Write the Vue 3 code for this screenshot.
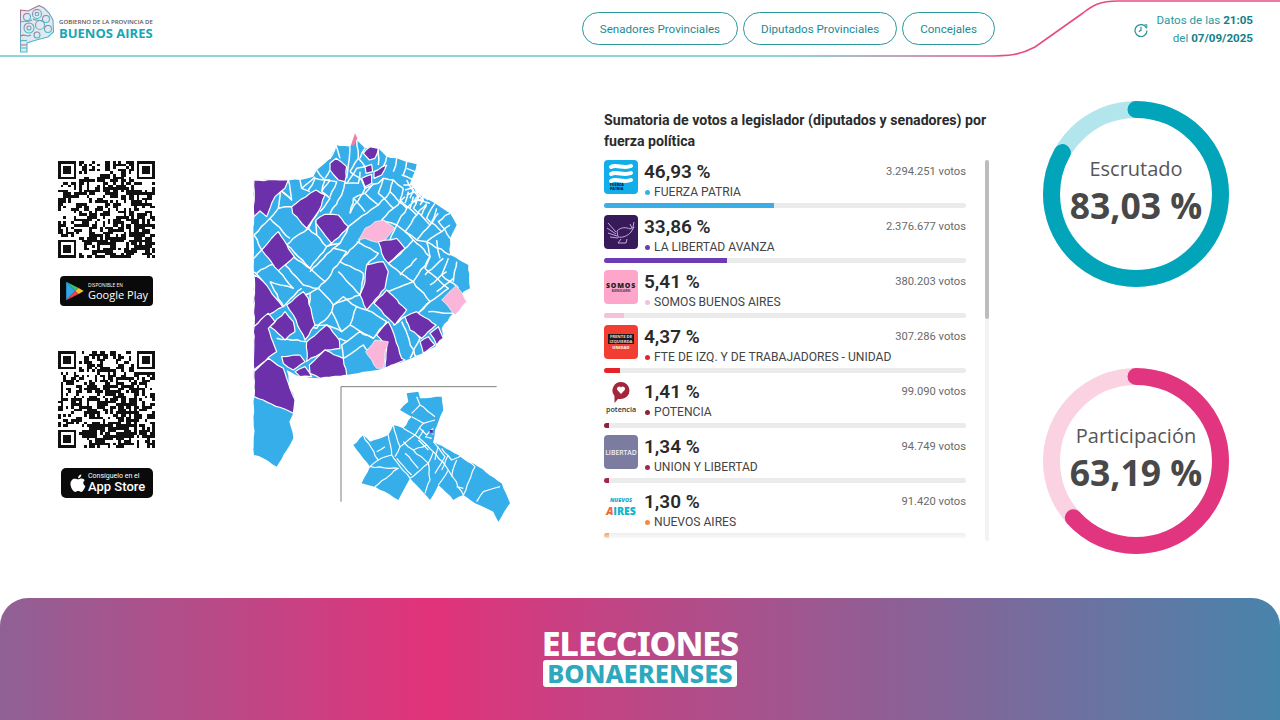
<template>
  <div class="page">
    <header class="top">
      <svg class="curve" width="1280" height="58" viewBox="0 0 1280 58">
        <defs>
          <linearGradient id="curveGrad" gradientUnits="userSpaceOnUse" x1="780" y1="0" x2="1010" y2="0">
            <stop offset="0" stop-color="#69c8cf" />
            <stop offset="1" stop-color="#e84a86" />
          </linearGradient>
        </defs>
        <path d="M0 56 H985 C1010 56 1020 55 1035 47 L1083 13 C1093 5 1100 1 1118 1 H1280" fill="none" stroke="url(#curveGrad)" stroke-width="1.6" />
      </svg>
      <div class="brand">
        <svg class="brand-map" width="34" height="48" viewBox="0 0 34 48">
          <defs>
            <linearGradient id="brandGrad" x1="0" y1="0" x2="0.4" y2="1">
              <stop offset="0" stop-color="#c9577f" />
              <stop offset="0.35" stop-color="#7f97b5" />
              <stop offset="1" stop-color="#45c0cc" />
            </linearGradient>
          </defs>
          <path d="M0.5 5 L8 6 L14 3 L19 0.5 L24 3 L29 8 L33 15 L33.5 27 L28 32 L20 34 L13 36 L7 38 L7 47 L0.5 47 Z" fill="#dfe9ef" />
          <g fill="none" stroke="url(#brandGrad)" stroke-width="1.1">
            <path d="M0.5 5 L8 6 L14 3 L19 0.5 L24 3 L29 8 L33 15 L33.5 27 L28 32 L20 34 L13 36 L7 38 L7 47 L0.5 47 Z" />
            <circle cx="7" cy="12" r="3.5" />
            <circle cx="17" cy="9" r="4.5" />
            <circle cx="17" cy="9" r="1.8" />
            <circle cx="26" cy="14" r="3.5" />
            <circle cx="9" cy="23" r="5" />
            <circle cx="9" cy="23" r="2" />
            <circle cx="20" cy="20" r="4.5" />
            <circle cx="28" cy="24" r="3.5" />
            <circle cx="17" cy="30" r="3" />
            <path d="M1 17 C5 15 8 18 12 15 M13 14 C17 17 21 13 25 18" />
            <path d="M1 31 C4 28 7 33 11 30 M1 36 C3 34 5 37 7 35" />
            <path d="M1 40 H7 M1 43 H7" />
          </g>
        </svg>
        <div class="brand-text">
          <span class="brand-small">GOBIERNO DE LA PROVINCIA DE</span>
          <span class="brand-big">BUENOS AIRES</span>
        </div>
      </div>
      <nav class="tabs">
        <a v-for="tab in tabs" :key="tab" class="tab">{{ tab }}</a>
      </nav>
      <div class="status">
        <svg class="status-icon" width="14" height="14" viewBox="0 0 14 14" fill="none" stroke="#2a8f96" stroke-width="1.2">
          <path d="M12.6 5.4 A6 6 0 1 0 13 7.4" />
          <path d="M10.4 1.9 L12.8 1.7 L12.8 5.2" stroke-width="1" />
          <path d="M7 3.8 V7.3 L4.8 8.6" />
        </svg>
        <div class="status-text">
          <div>Datos de las <b>21:05</b></div>
          <div>del <b>07/09/2025</b></div>
        </div>
      </div>
    </header>

    <main class="content">
      <section class="stores">
        <svg class="qr" width="97" height="97" :viewBox="`0 0 ${qrSize} ${qrSize}`" shape-rendering="crispEdges">
          <path :d="qrA" fill="#111" />
        </svg>
        <div class="badge play">
          <svg width="19" height="20" viewBox="0 0 22 24">
            <path d="M1 1 L12 12 L1 23 Z" fill="#2fa6e8" />
            <path d="M1 1 L16 8.5 L12 12 Z" fill="#35c26f" />
            <path d="M1 23 L16 15.5 L12 12 Z" fill="#ee4152" />
            <path d="M16 8.5 L22 12 L16 15.5 L12 12 Z" fill="#fbc02d" />
          </svg>
          <div class="badge-text">
            <span class="play-small">DISPONIBLE EN</span>
            <span class="play-big">Google Play</span>
          </div>
        </div>
        <svg class="qr qr-second" width="97" height="97" :viewBox="`0 0 ${qrSize} ${qrSize}`" shape-rendering="crispEdges">
          <path :d="qrB" fill="#111" />
        </svg>
        <div class="badge apple">
          <svg width="16" height="19" viewBox="0 0 17 20" fill="#fff">
            <path d="M12 0.5 C12.2 2.6 10.4 4.6 8.5 4.5 C8.3 2.5 10.2 0.6 12 0.5 Z" />
            <path d="M8.6 5.6 C9.6 5.6 10.8 4.7 12.4 4.8 C13.6 4.9 14.9 5.4 15.7 6.6 C13.4 8 13.8 11.6 16.4 12.7 C15.7 14.6 13.9 18.9 12 18.9 C10.8 18.9 10.2 18.1 8.7 18.1 C7.2 18.1 6.5 18.9 5.4 18.9 C3.3 18.9 0.5 14 0.5 10.6 C0.5 7 2.8 4.9 5 4.9 C6.3 4.9 7.6 5.6 8.6 5.6 Z" />
          </svg>
          <div class="badge-text">
            <span class="apple-small">Consíguelo en el</span>
            <span class="apple-big">App Store</span>
          </div>
        </div>
      </section>

      <svg class="map" width="265" height="405" viewBox="0 0 795 1215">
        <polygon :points="mainOutline" fill="#35aeea" />
        <g fill="none" stroke="#fff" stroke-width="4.4" stroke-linejoin="round">
          <polyline v-for="(line, i) in mapLines" :key="i" :points="line" />
        </g>
        <polygon v-for="(p, i) in purpleAreas" :key="'p' + i" :points="p" fill="#6c31aa" stroke="#fff" stroke-width="3.6" stroke-linejoin="round" />
        <polygon v-for="(p, i) in pinkAreas" :key="'k' + i" :points="p" fill="#fbb5d8" stroke="#fff" stroke-width="2" stroke-linejoin="round" />
        <polygon points="303,60 315,25 322,40 312,62" fill="#ee7f9f" />
        <g transform="translate(255,765)">
          <path d="M18 365 V20 H485" fill="none" stroke="#7d7d7d" stroke-width="3" />
          <polygon :points="insetOutline" fill="#35aeea" />
          <g fill="none" stroke="#fff" stroke-width="3.6" stroke-linejoin="round">
            <polyline v-for="(line, i) in insetLines" :key="i" :points="line" />
          </g>
          <rect x="284" y="150" width="9" height="8" fill="#5b2aa0" />
          <rect x="290" y="160" width="6" height="4" fill="#f6b6d8" />
        </g>
      </svg>

      <section class="results">
        <h2 class="results-title">Sumatoria de votos a legislador (diputados y senadores) por fuerza política</h2>
        <div class="results-body">
          <div class="rows">
            <div v-for="party in parties" :key="party.name" class="row">
              <div class="row-main">
                <div class="party-logo" :class="party.logo">
                  <template v-if="party.logo === 'fp'">
                    <svg width="34" height="34" viewBox="0 0 34 34" fill="none" stroke="#fff" stroke-width="4" stroke-linecap="round">
                      <path d="M7 7 C12 4 20 9 27 6" />
                      <path d="M7 14 C12 11 20 16 27 13" />
                      <path d="M7 21 C12 18 20 23 27 20" />
                    </svg>
                    <span class="fp-name">FUERZA<br />PATRIA</span>
                  </template>
                  <svg v-else-if="party.logo === 'lla'" width="34" height="34" viewBox="0 0 34 34" fill="none" stroke="#d6b8ea" stroke-width="0.9">
                    <path d="M4 8 L12 17 M3 13 L12 19 M4 18 L13 21 M6 22 L14 23" />
                    <path d="M13 16 C17 12 22 12 26 14 L30 12 L27 17 C24 21 18 23 14 22 Z" />
                    <path d="M26 9 L28 13 M30 7 L29 12 M17 24 L14 28 L22 28 L23 24" />
                  </svg>
                  <template v-else-if="party.logo === 'somos'">
                    <span class="somos-name">SOMOS</span>
                    <span class="somos-sub">BUENOS AIRES</span>
                  </template>
                  <div v-else-if="party.logo === 'fit'" class="fit-box">
                    <span class="fit-name">FRENTE DE<br />IZQUIERDA</span>
                    <span class="fit-sub">UNIDAD</span>
                  </div>
                  <template v-else-if="party.logo === 'potencia'">
                    <svg width="20" height="24" viewBox="0 0 20 24">
                      <path d="M10 1 A8.5 8.5 0 0 1 10 18 H7 L3.5 22 V15 A8.5 8.5 0 0 1 10 1 Z" fill="#a3263c" />
                      <path d="M10 13 L6.3 9 A2.2 2.2 0 0 1 10 6.6 A2.2 2.2 0 0 1 13.7 9 Z" fill="#fff" />
                    </svg>
                    <span class="potencia-name">potencia</span>
                  </template>
                  <span v-else-if="party.logo === 'union'" class="union-name">LIBERTAD</span>
                  <template v-else>
                    <span class="nuevos-small">NUEVOS</span>
                    <span class="nuevos-big"><i>A</i>IRES</span>
                  </template>
                </div>
                <div class="row-text">
                  <div class="row-top">
                    <span class="percent">{{ party.percent }} %</span>
                    <span class="votes">{{ party.votes }} votos</span>
                  </div>
                  <div class="party-name">
                    <span class="dot" :style="{ background: party.color }"></span>{{ party.name }}
                  </div>
                </div>
              </div>
              <div class="bar">
                <div class="bar-fill" :style="{ width: barWidth(party), background: party.color }"></div>
              </div>
            </div>
          </div>
          <div class="scroll-track"><div class="scroll-thumb"></div></div>
        </div>
      </section>

      <section class="gauges">
        <div v-for="gauge in gauges" :key="gauge.label" class="gauge">
          <svg width="186" height="186" viewBox="0 0 186 186">
            <circle cx="93" cy="93" r="84.5" fill="none" :stroke="gauge.track" stroke-width="17" />
            <circle
              cx="93"
              cy="93"
              r="84.5"
              fill="none"
              :stroke="gauge.color"
              stroke-width="17"
              stroke-linecap="round"
              transform="rotate(-90 93 93)"
              :stroke-dasharray="dash(gauge.value)"
            />
          </svg>
          <div class="gauge-text">
            <span class="gauge-label">{{ gauge.label }}</span>
            <span class="gauge-value">{{ gauge.text }}</span>
          </div>
        </div>
      </section>
    </main>

    <footer class="bottom">
      <div class="title-top">ELECCIONES</div>
      <div class="title-box">BONAERENSES</div>
    </footer>
  </div>
</template>

<script setup>
const tabs = ['Senadores Provinciales', 'Diputados Provinciales', 'Concejales'];

const parties = [
  { logo: 'fp', percent: '46,93', votes: '3.294.251', name: 'FUERZA PATRIA', color: '#3caee6', value: 46.93 },
  { logo: 'lla', percent: '33,86', votes: '2.376.677', name: 'LA LIBERTAD AVANZA', color: '#6d3cb4', value: 33.86 },
  { logo: 'somos', percent: '5,41', votes: '380.203', name: 'SOMOS BUENOS AIRES', color: '#f8bfdc', value: 5.41 },
  { logo: 'fit', percent: '4,37', votes: '307.286', name: 'FTE DE IZQ. Y DE TRABAJADORES - UNIDAD', color: '#e3242b', value: 4.37 },
  { logo: 'potencia', percent: '1,41', votes: '99.090', name: 'POTENCIA', color: '#8e2338', value: 1.41 },
  { logo: 'union', percent: '1,34', votes: '94.749', name: 'UNION Y LIBERTAD', color: '#a3264f', value: 1.34 },
  { logo: 'nuevos', percent: '1,30', votes: '91.420', name: 'NUEVOS AIRES', color: '#f58a3c', value: 1.3 },
];

const gauges = [
  { label: 'Escrutado', text: '83,03 %', value: 83.03, color: '#02a4b9', track: '#b3e5ed' },
  { label: 'Participación', text: '63,19 %', value: 63.19, color: '#e2357f', track: '#fad2e2' },
];

function barWidth(party) {
  return Math.max(party.value, 1.3) + '%';
}

function dash(value) {
  const length = 2 * Math.PI * 84.5;
  return `${(length * value) / 100} ${length}`;
}

function makeRandom(seed) {
  let state = seed;
  return () => {
    state = (state * 1664525 + 1013904223) >>> 0;
    return ((state >>> 16) & 1023) / 1024;
  };
}

// fake QR codes, the pattern only has to look dense
const qrSize = 37;

function buildQr(seed) {
  const rand = makeRandom(seed);
  const inFinder = (x, y) => (x < 8 && y < 8) || (x > qrSize - 9 && y < 8) || (x < 8 && y > qrSize - 9);
  let d = '';
  const prev = [];
  for (let y = 0; y < qrSize; y++) {
    for (let x = 0; x < qrSize; x++) {
      // copy a neighbour now and then, gives the chunky blocks of the original
      const r = rand();
      let on = rand() < 0.54;
      if (r < 0.16 && x > 0) on = prev[y * qrSize + x - 1];
      else if (r < 0.3 && y > 0) on = prev[(y - 1) * qrSize + x];
      prev[y * qrSize + x] = on;
      if (on && !inFinder(x, y)) d += `M${x} ${y}h1v1h-1z`;
    }
  }
  const finder = (x, y) =>
    `M${x} ${y}h7v1h-7zM${x} ${y + 6}h7v1h-7zM${x} ${y + 1}h1v5h-1zM${x + 6} ${y + 1}h1v5h-1zM${x + 2} ${y + 2}h3v3h-3z`;
  return d + finder(0, 0) + finder(qrSize - 7, 0) + finder(0, qrSize - 7);
}

const qrA = buildQr(20250907);
const qrB = buildQr(777123);

// wobble straight segments so the borders look like real partido limits
const wobble = makeRandom(4242);

function roughen(flat, closed, amount = 3) {
  const pts = [];
  const count = flat.length / 2;
  const last = closed ? count : count - 1;
  for (let i = 0; i < last; i++) {
    const x1 = flat[i * 2];
    const y1 = flat[i * 2 + 1];
    const x2 = flat[((i + 1) % count) * 2];
    const y2 = flat[((i + 1) % count) * 2 + 1];
    pts.push(`${x1},${y1}`);
    const steps = Math.floor(Math.hypot(x2 - x1, y2 - y1) / 14);
    for (let s = 1; s < steps; s++) {
      const t = s / steps;
      const jx = (wobble() - 0.5) * 2 * amount;
      const jy = (wobble() - 0.5) * 2 * amount;
      pts.push(`${(x1 + (x2 - x1) * t + jx).toFixed(1)},${(y1 + (y2 - y1) * t + jy).toFixed(1)}`);
    }
  }
  if (!closed) pts.push(`${flat[flat.length - 2]},${flat[flat.length - 1]}`);
  return pts.join(' ');
}

// map coordinates are 3x the screen pixels
const mainOutline = roughen(
  [12, 165, 150, 165, 190, 155, 200, 135, 240, 100, 258, 60, 300, 65, 320, 45, 345, 70, 385, 70, 410, 95, 440, 100, 500, 118, 490, 150, 480, 175, 510, 210, 555, 235, 600, 265, 620, 300, 600, 340, 600, 390, 655, 420, 660, 490, 640, 500, 610, 565, 575, 610, 580, 640, 555, 665, 470, 705, 400, 730, 340, 740, 290, 750, 210, 760, 150, 755, 110, 735, 120, 790, 135, 825, 130, 865, 118, 890, 130, 940, 80, 1025, 40, 1000, 12, 990],
  true,
  2
);

const mapLines = [
  [115, 165, 125, 225, 90, 195, 85, 250, 60, 280],
  [150, 165, 155, 190, 180, 200],
  [200, 135, 225, 165, 215, 200],
  [240, 135, 225, 160],
  [258, 60, 270, 100],
  [300, 65, 295, 120, 290, 160],
  [320, 45, 325, 100, 345, 125],
  [345, 70, 330, 100],
  [385, 70, 385, 120],
  [410, 95, 400, 125],
  [440, 100, 430, 140],
  [470, 110, 460, 150],
  [285, 170, 275, 210, 240, 265],
  [240, 165, 215, 200, 240, 220, 210, 260],
  [325, 100, 300, 140],
  [330, 140, 325, 175, 285, 175],
  [335, 165, 345, 190, 300, 265],
  [370, 175, 345, 205, 385, 240, 350, 265, 295, 305],
  [400, 160, 385, 205, 430, 250, 395, 285],
  [430, 165, 420, 200, 470, 250, 440, 300],
  [460, 190, 450, 225, 500, 270, 465, 320],
  [510, 210, 490, 250, 540, 300, 500, 345],
  [555, 235, 530, 280, 575, 320, 530, 350],
  [600, 265, 565, 290, 600, 340],
  [60, 280, 120, 340],
  [12, 330, 35, 375],
  [130, 340, 175, 310, 200, 330, 230, 365, 180, 430],
  [110, 360, 145, 395, 180, 430, 225, 470, 205, 490],
  [85, 437, 130, 490, 60, 470],
  [12, 440, 40, 470],
  [20, 445, 60, 420],
  [60, 470, 100, 545, 155, 490],
  [130, 395, 105, 420, 160, 480, 205, 490, 165, 510],
  [230, 365, 270, 355, 295, 305],
  [270, 355, 250, 370, 180, 440],
  [290, 380, 270, 410, 340, 445],
  [280, 395, 330, 345],
  [320, 350, 385, 385, 350, 420],
  [415, 415, 490, 470, 410, 500],
  [490, 345, 540, 395, 490, 470, 540, 530, 470, 590],
  [540, 395, 525, 430, 595, 490, 540, 530],
  [595, 400, 575, 450, 625, 490],
  [525, 450, 580, 400],
  [205, 490, 250, 540, 280, 515, 320, 545, 300, 600],
  [180, 505, 170, 600, 200, 610, 245, 560, 250, 540],
  [245, 560, 275, 620, 230, 600],
  [300, 600, 370, 640, 410, 590],
  [370, 640, 330, 620, 290, 650, 268, 640],
  [300, 600, 275, 620],
  [290, 650, 275, 660, 280, 700],
  [280, 700, 340, 660, 375, 705],
  [470, 590, 510, 640, 480, 700],
  [430, 600, 465, 575],
  [455, 590, 500, 700],
  [535, 560, 610, 565],
  // smaller partidos in the north and east
  [258, 60, 240, 100, 205, 125],
  [155, 190, 195, 155],
  [175, 195, 195, 160, 240, 165],
  [225, 165, 260, 170, 240, 215],
  [290, 175, 320, 130, 345, 125],
  [300, 140, 335, 165],
  [345, 190, 385, 175, 400, 160, 430, 165, 460, 190],
  [345, 205, 310, 220, 300, 265],
  [310, 220, 345, 260],
  [385, 240, 420, 200],
  [430, 250, 465, 215],
  [470, 250, 510, 210],
  [500, 270, 530, 235],
  [540, 300, 565, 265],
  [575, 320, 600, 300],
  [395, 285, 440, 300, 500, 345, 530, 350, 540, 395],
  [465, 320, 490, 345],
  [530, 350, 600, 390],
  [560, 345, 570, 400],
  [440, 300, 420, 345, 460, 375, 490, 345],
  [460, 375, 415, 415],
  [500, 400, 450, 450],
  [90, 195, 125, 225],
  [85, 250, 125, 245],
  [60, 280, 12, 330],
  [130, 340, 110, 360],
  [35, 375, 12, 400],
  [175, 310, 205, 260],
  [200, 330, 198, 285],
  [230, 365, 245, 355],
  [180, 430, 130, 395],
  [60, 420, 105, 420],
  [250, 370, 290, 380],
  [270, 410, 225, 470],
  [340, 445, 330, 510, 265, 440],
  [250, 540, 330, 510],
  [350, 555, 320, 545],
  [350, 555, 410, 590],
  [410, 500, 372, 535],
  [540, 530, 510, 560],
  [195, 600, 230, 600],
  [80, 640, 170, 650],
  [540, 480, 590, 440],
  [560, 500, 610, 460],
  [620, 410, 610, 470],
  [495, 140, 470, 130],
  // dense block near the capital
  [470, 165, 490, 195, 480, 220],
  [480, 185, 505, 215, 495, 235],
  [495, 190, 520, 225, 510, 240],
  [470, 210, 510, 200, 535, 225],
  [485, 230, 530, 215],
  [520, 205, 515, 235],
  [460, 180, 510, 175],
  [455, 150, 490, 165],
  [465, 195, 500, 180],
  [500, 225, 540, 235],
  [475, 200, 465, 235],
  [490, 215, 480, 250],
  [530, 240, 515, 270],
  [560, 250, 545, 290],
].map((line) => roughen(line, false, 2.5));

const purpleAreas = [
  [12, 165, 115, 165, 105, 190, 75, 215, 60, 250, 50, 275, 30, 258, 12, 275],
  [125, 245, 180, 205, 198, 195, 225, 210, 205, 260, 170, 310, 128, 265],
  [198, 285, 225, 268, 265, 270, 295, 305, 245, 355, 198, 295],
  [35, 375, 85, 320, 133, 395, 85, 437],
  [240, 115, 258, 100, 290, 125, 285, 170, 265, 165, 240, 135],
  [340, 85, 360, 65, 385, 70, 375, 100, 358, 105],
  [345, 125, 365, 118, 368, 140, 348, 145],
  [372, 140, 410, 120, 395, 150, 372, 160],
  [335, 160, 365, 148, 365, 175, 345, 185],
  [385, 350, 440, 340, 465, 370, 415, 415, 395, 385],
  [330, 510, 345, 470, 350, 420, 400, 410, 415, 440, 405, 490, 350, 555],
  [372, 535, 410, 495, 470, 555, 435, 600],
  [465, 575, 500, 560, 558, 600, 515, 640, 480, 615],
  [510, 650, 535, 635, 555, 660, 520, 685],
  [540, 625, 565, 605, 580, 640, 560, 660],
  [380, 630, 415, 590, 425, 610, 455, 700, 465, 705, 405, 730, 410, 670, 390, 640],
  [110, 540, 160, 500, 175, 520, 195, 600, 165, 645, 130, 570],
  [60, 605, 105, 560, 130, 590, 135, 620, 105, 645],
  [12, 450, 40, 470, 98, 545, 55, 570, 12, 605],
  [12, 605, 55, 565, 75, 590, 55, 610, 80, 680, 12, 735],
  [170, 650, 230, 600, 268, 645, 270, 670, 225, 675, 170, 710],
  [178, 720, 225, 675, 280, 700, 290, 750, 210, 760, 180, 745],
  [95, 695, 150, 690, 165, 710, 130, 735, 100, 715],
  [135, 740, 165, 725, 185, 755, 150, 755],
  [12, 740, 55, 700, 100, 730, 110, 760, 120, 790, 135, 825, 130, 865, 12, 815],
].map((area) => roughen(area, true, 2));

const pinkAreas = [
  [325, 345, 345, 310, 375, 290, 400, 285, 435, 310, 405, 345, 380, 352, 345, 340],
  [575, 525, 620, 480, 650, 530, 615, 570],
  [347, 680, 375, 645, 415, 650, 405, 680, 400, 730, 380, 730],
].map((area) => roughen(area, true, 2));

const insetOutline = roughen(
  [215, 40, 250, 35, 255, 55, 320, 50, 325, 90, 300, 150, 295, 185, 370, 225, 430, 260, 500, 310, 525, 370, 490, 425, 475, 395, 420, 370, 385, 345, 355, 360, 310, 315, 285, 360, 225, 295, 190, 360, 120, 320, 80, 310, 105, 260, 55, 195, 85, 165, 105, 185, 160, 165, 175, 135, 205, 145, 230, 110, 195, 90, 220, 65],
  true,
  1.5
);

const insetLines = [
  [245, 50, 255, 75, 230, 100],
  [255, 75, 300, 110],
  [230, 110, 265, 130, 240, 165, 205, 145],
  [265, 130, 300, 120],
  [240, 165, 195, 200, 175, 135],
  [240, 165, 275, 195, 235, 210, 205, 185],
  [255, 145, 275, 165, 295, 145],
  [85, 165, 130, 240, 105, 260],
  [160, 165, 170, 225, 130, 240],
  [170, 225, 225, 295],
  [195, 200, 180, 230],
  [235, 210, 280, 250, 225, 295],
  [105, 260, 190, 265, 120, 320],
  [280, 250, 295, 215, 275, 195],
  [295, 215, 340, 270, 310, 315],
  [295, 185, 330, 230, 300, 280],
  [320, 205, 350, 240, 385, 225],
  [340, 270, 385, 345],
  [360, 215, 420, 260, 385, 345],
  [385, 325, 365, 320],
  [425, 365, 445, 335, 495, 320],
  [280, 250, 285, 300, 270, 340],
  [270, 170, 290, 175],
  [250, 180, 280, 210],
  [265, 150, 250, 175],
  [310, 200, 300, 240],
  [340, 225, 320, 270],
  [365, 240, 350, 290],
  [210, 220, 250, 265],
  [185, 235, 230, 285],
  [150, 200, 125, 215],
].map((line) => roughen(line, false, 2));
</script>

<style>
html,
body {
  background: #fff;
}
</style>

<style scoped>
.page {
  width: 1280px;
  height: 720px;
  display: flex;
  flex-direction: column;
  overflow: hidden;
  background: #fff;
  font-family: Roboto, "Noto Sans", sans-serif;
  color: #333;
}

.top {
  position: relative;
  height: 57px;
  flex: none;
  display: flex;
  align-items: center;
  padding: 0 27px 0 20px;
  box-sizing: border-box;
}

.curve {
  position: absolute;
  left: 0;
  top: 0;
}

.brand {
  display: flex;
  align-items: center;
  gap: 5px;
}

.brand-text {
  display: flex;
  flex-direction: column;
  font-family: "Open Sans", sans-serif;
}

.brand-small {
  font-size: 6.1px;
  line-height: 9px;
  font-weight: 600;
  color: #555;
  white-space: nowrap;
}

.brand-big {
  font-size: 13px;
  line-height: 15px;
  font-weight: 700;
  color: #16a6b6;
  white-space: nowrap;
}

.tabs {
  margin-left: auto;
  margin-right: 139px;
  display: flex;
  gap: 5px;
}

.tab {
  position: relative;
  height: 33px;
  display: flex;
  align-items: center;
  padding: 0 17px;
  box-sizing: border-box;
  border: 1px solid #2a969c;
  border-radius: 17px;
  font-size: 11.6px;
  color: #1c8a92;
  white-space: nowrap;
  background: #fff;
}

.status {
  width: 119px;
  display: flex;
  align-items: center;
  justify-content: space-between;
}

.status-icon {
  margin-top: 2px;
}

.status-text {
  font-size: 11.6px;
  line-height: 18px;
  text-align: right;
  color: #2a9aa2;
  white-space: nowrap;
}

.status-text b {
  color: #14808a;
  font-weight: 700;
}

.content {
  flex: 1;
  display: flex;
  align-items: flex-start;
}

.stores {
  width: 97px;
  margin: 104px 0 0 58px;
  display: flex;
  flex-direction: column;
  align-items: center;
}

.qr {
  display: block;
}

.qr-second {
  margin-top: 45px;
}

.badge {
  width: 93px;
  height: 30px;
  margin-top: 18px;
  display: flex;
  align-items: center;
  box-sizing: border-box;
  background: #0a0a0a;
  color: #fff;
  border-radius: 4px;
  font-family: "Open Sans", sans-serif;
}

.play {
  padding-left: 5px;
  gap: 4px;
}

.apple {
  width: 92px;
  margin: 20px 0 0 1px;
  padding-left: 9px;
  gap: 1px;
  border-radius: 5px;
}

.apple .badge-text {
  margin-left: 1px;
}

.badge-text {
  display: flex;
  flex-direction: column;
  white-space: nowrap;
}

.play-small {
  font-size: 4.8px;
  line-height: 7px;
  margin-top: 1px;
}

.play-big {
  font-size: 11px;
  line-height: 12px;
  font-weight: 500;
}

.apple-small {
  font-family: Roboto, sans-serif;
  font-size: 7px;
  line-height: 8px;
}

.apple-big {
  font-family: Roboto, sans-serif;
  font-size: 13px;
  line-height: 14px;
  font-weight: 500;
}

.map {
  flex: none;
  margin: 68px 0 0 95px;
  display: block;
}

.results {
  width: 386px;
  margin: 53px 0 0 89px;
  flex: none;
}

.results-title {
  margin: 0 0 8px;
  font-size: 14.15px;
  line-height: 21px;
  font-weight: 700;
  color: #2b2b2b;
}

.results-body {
  height: 381px;
  display: flex;
  justify-content: space-between;
  overflow: hidden;
}

.rows {
  position: relative;
  width: 362px;
  overflow: hidden;
}

/* the list fades out at the bottom edge */
.rows::after {
  content: "";
  position: absolute;
  left: 0;
  right: 0;
  bottom: 0;
  height: 8px;
  background: linear-gradient(rgba(255, 255, 255, 0.2), rgba(255, 255, 255, 0.95));
}

.row {
  height: 55px;
}

.row-main {
  display: flex;
  gap: 6px;
  height: 34px;
}

.party-logo {
  width: 34px;
  height: 34px;
  flex: none;
  position: relative;
  border-radius: 4px;
  display: flex;
  flex-direction: column;
  align-items: center;
  justify-content: center;
  overflow: hidden;
  font-family: "Open Sans", sans-serif;
}

.fp {
  background: #12aeea;
}

.fp svg {
  position: absolute;
  left: 0;
  top: 0;
}

.fp-name {
  position: absolute;
  left: 6px;
  bottom: 3px;
  font-size: 3.6px;
  line-height: 4px;
  font-weight: 800;
  color: #123;
}

.lla {
  background: #371a59;
}

.somos {
  background: #fda6ca;
}

.somos-name {
  font-size: 7px;
  line-height: 8px;
  font-weight: 800;
  letter-spacing: 0.8px;
  color: #222;
}

.somos-sub {
  font-size: 2.6px;
  line-height: 3px;
  font-weight: 700;
  color: #333;
}

.fit {
  background: #f23d33;
}

.fit-box {
  display: flex;
  flex-direction: column;
  align-items: center;
}

.fit-name {
  width: 26px;
  background: #1b1b1b;
  color: #f5d5d0;
  font-size: 4.2px;
  line-height: 5px;
  font-weight: 700;
  text-align: center;
}

.fit-sub {
  font-size: 4.2px;
  line-height: 7px;
  font-weight: 800;
  color: #ffe3de;
}

.potencia {
  background: transparent;
}

.potencia-name {
  font-size: 7.2px;
  line-height: 8px;
  font-weight: 600;
  color: #333;
}

.union {
  background: #7b7c9f;
}

.union-name {
  font-size: 6.8px;
  font-weight: 600;
  color: #f0f0f5;
}

.nuevos {
  background: transparent;
}

.nuevos-small {
  font-size: 5.6px;
  line-height: 8px;
  font-weight: 800;
  color: #16a7c4;
  font-style: italic;
}

.nuevos-big {
  font-size: 10.5px;
  line-height: 14px;
  font-weight: 800;
  color: #12b5c9;
}

.nuevos-big i {
  color: #f0663a;
}

.row-text {
  flex: 1;
  min-width: 0;
}

.row-top {
  display: flex;
  justify-content: space-between;
  align-items: center;
  height: 23px;
}

.percent {
  font-size: 19px;
  font-weight: 600;
  color: #2a2a2a;
}

.votes {
  font-size: 11.2px;
  color: #6a6a6a;
}

.party-name {
  display: flex;
  align-items: center;
  font-size: 12.1px;
  line-height: 16px;
  margin-top: 1px;
  color: #444;
  white-space: nowrap;
}

.dot {
  width: 5px;
  height: 5px;
  border-radius: 50%;
  margin: 0 4px 0 1px;
}

.bar {
  height: 5px;
  margin-top: 9px;
  background: #ebebeb;
  border-radius: 3px;
  overflow: hidden;
}

.bar-fill {
  height: 100%;
}

.scroll-track {
  width: 4px;
  margin-right: 1px;
  background: #f3f3f3;
  border-radius: 2px;
}

.scroll-thumb {
  height: 159px;
  background: #bcbcbc;
  border-radius: 2px;
}

.gauges {
  width: 186px;
  margin: 44px 0 0 53px;
  flex: none;
  display: flex;
  flex-direction: column;
  gap: 81px;
}

.gauge {
  position: relative;
  height: 186px;
  font-family: "Open Sans", sans-serif;
}

.gauge svg {
  display: block;
}

.gauge-text {
  position: absolute;
  inset: 0;
  display: flex;
  flex-direction: column;
  align-items: center;
  justify-content: center;
  color: #484848;
  padding-bottom: 9px;
  box-sizing: border-box;
}

.gauge-label {
  font-size: 20px;
  line-height: 30px;
  color: #565656;
}

.gauge-value {
  font-size: 35.5px;
  line-height: 42px;
  font-weight: 700;
}

.bottom {
  height: 122px;
  flex: none;
  border-radius: 28px 28px 0 0;
  background: linear-gradient(90deg, #8f6195 0%, #e2337a 33.6%, #4884ab 100%);
  display: flex;
  flex-direction: column;
  align-items: center;
  padding-top: 28px;
  box-sizing: border-box;
  font-family: "Noto Sans", sans-serif;
  font-weight: 800;
}

.title-top {
  font-size: 34px;
  line-height: 34px;
  color: #fff;
  letter-spacing: -1.1px;
}

.title-box {
  width: 194px;
  height: 27px;
  background: #fff;
  border-radius: 3px;
  text-align: center;
  font-size: 25.5px;
  line-height: 27px;
  color: #2ea8bd;
}
</style>
